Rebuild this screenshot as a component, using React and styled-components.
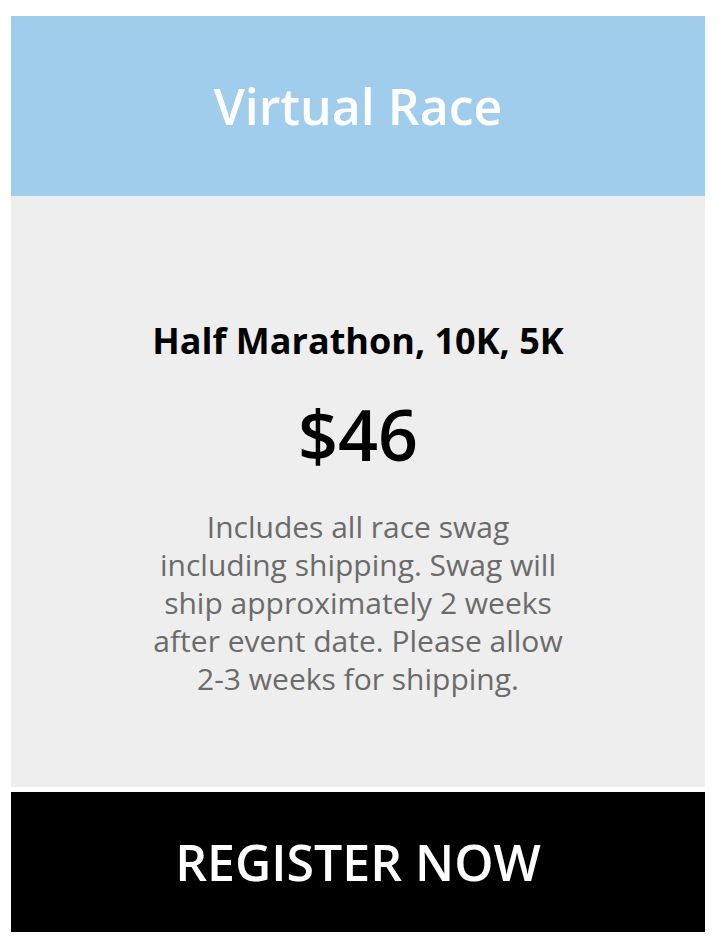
import React from 'react'
import styled, { createGlobalStyle } from 'styled-components'

const GlobalStyle = createGlobalStyle`
  body {
    margin: 0;
    background: #fff;
    font-family: "Open Sans", "Noto Sans", sans-serif;
  }
`

let Page = styled.div`
  padding: 16px 15px 20px 11px;
`

let Card = styled.div`
  display: flex;
  flex-direction: column;
`

let Header = styled.div`
  height: 180px;
  background: #a1cdec;
  display: flex;
  align-items: center;
  justify-content: center;
  color: #fff;
  font-size: 50px;
  font-weight: 600;
`

let Body = styled.div`
  height: 591px;
  background: #eeeeee;
  display: flex;
  flex-direction: column;
  align-items: center;
  text-align: center;
  padding-top: 121px;
  box-sizing: border-box;
`

let Title = styled.div`
  font-size: 36px;
  font-weight: 700;
  color: #000;
  line-height: 47px;
`

let Price = styled.div`
  font-size: 70px;
  font-weight: 600;
  color: #000;
  line-height: 80px;
  margin-top: 30px;
`

let Description = styled.p`
  margin: 34px 0 0;
  width: 420px;
  font-size: 30px;
  line-height: 38px;
  color: #6b6b6b;
`

let Register = styled.a`
  height: 140px;
  margin-top: 5px;
  background: #000;
  color: #fff;
  display: flex;
  align-items: center;
  justify-content: center;
  font-size: 50px;
  font-weight: 600;
  text-decoration: none;
  text-transform: uppercase;
`

export default () => (
  <Page>
    <GlobalStyle />
    <Card>
      <Header>Virtual Race</Header>
      <Body>
        <Title>Half Marathon, 10K, 5K</Title>
        <Price>$46</Price>
        <Description>
          Includes all race swag including shipping. Swag will ship approximately 2 weeks after event date. Please allow 2-3 weeks for shipping.
        </Description>
      </Body>
      <Register href="#">Register Now</Register>
    </Card>
  </Page>
)
